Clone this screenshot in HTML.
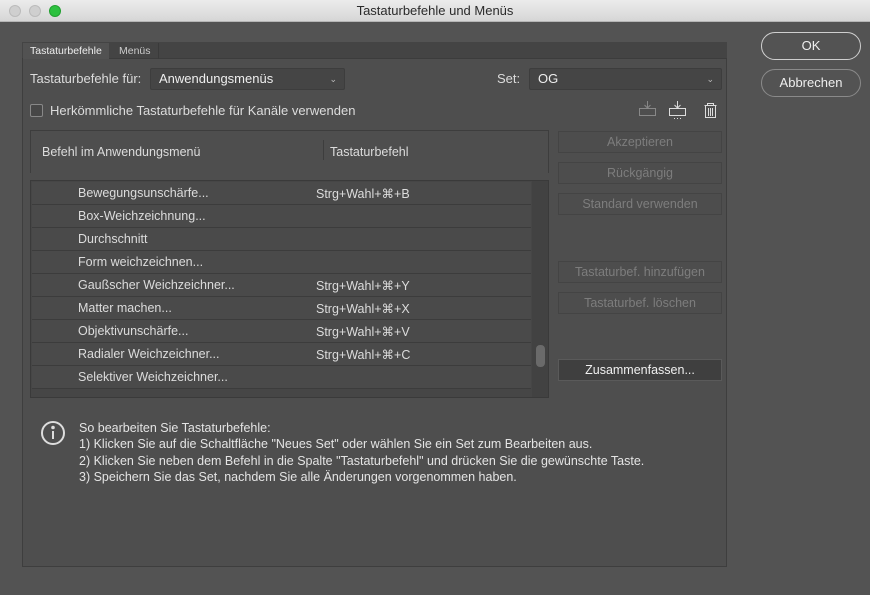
<!DOCTYPE html>
<html><head><meta charset="utf-8"><style>
*{box-sizing:border-box;margin:0;padding:0}
body{width:870px;height:595px;background:#535353;font-family:"Liberation Sans",sans-serif;font-size:12.5px;color:#dcdcdc;position:relative;overflow:hidden}
.abs{position:absolute}
.title{left:0;top:0;width:870px;height:22px;background:linear-gradient(#ececec,#d6d6d6);border-bottom:1px solid #b5b5b5;text-align:center;line-height:22px;color:#2a2a2a;font-size:13px}
.dot{top:5px;width:12px;height:12px;border-radius:50%}
.panel{left:22px;top:42px;width:705px;height:525px;background:#4e4e4e;border:1px solid #3e3e3e}
.tabbar{left:22px;top:42px;width:705px;height:17px;background:#444;border-bottom:1px solid #3c3c3c}
.tab{top:43px;height:16px;line-height:16px;font-size:10.5px;padding:0 7px}
.sel{left:150px;height:22px;background:#454545;border:1px solid #3d3d3d;border-radius:2px;color:#eee;padding-left:8px;line-height:20px;font-size:13px}
.chev{position:absolute;right:7px;top:0;font-size:9px;color:#bbb}
.btn{left:558px;width:164px;height:22px;border:1px solid #444;background:#4d4d4d;text-align:center;line-height:20px;color:#7d7d7d;font-size:12.5px}
.row{left:32px;width:499px;height:23px;border-bottom:1px solid #3c3c3c;background:#4a4a4a}
.row span{position:absolute;top:4px}
.c1{left:46px}.c2{left:284px}
.pill{left:761px;width:100px;height:28px;border:1px solid #cfcfcf;border-radius:14px;text-align:center;line-height:26px;color:#eee;font-size:13px}
</style></head><body>
<div class="abs title">Tastaturbefehle und Menüs</div>
<div class="abs dot" style="left:9px;background:#cfcfcf;border:1px solid #bbb"></div>
<div class="abs dot" style="left:29px;background:#cfcfcf;border:1px solid #bbb"></div>
<div class="abs dot" style="left:49px;background:#2dc13f;border:1px solid #22a030"></div>

<div class="abs panel"></div>
<div class="abs tabbar"></div>
<div class="abs tab" style="left:23px;background:#525252;color:#eee">Tastaturbefehle</div>
<div class="abs tab" style="left:112px;border-right:1px solid #3a3a3a;color:#ccc">Menüs</div>

<div class="abs" style="left:30px;top:71px;font-size:13px">Tastaturbefehle für:</div>
<div class="abs sel" style="top:68px;width:195px">Anwendungsmenüs<span class="chev">⌄</span></div>
<div class="abs" style="left:497px;top:71px;font-size:13px">Set:</div>
<div class="abs sel" style="left:529px;top:68px;width:193px">OG<span class="chev">⌄</span></div>

<div class="abs" style="left:30px;top:104px;width:13px;height:13px;border:1px solid #888;border-radius:2px;background:#474747"></div>
<div class="abs" style="left:50px;top:103px;font-size:13px">Herkömmliche Tastaturbefehle für Kanäle verwenden</div>

<svg class="abs" style="left:636px;top:100px" width="90" height="20" viewBox="0 0 90 20" fill="none" stroke="#9a9a9a" stroke-width="1">
<path d="M3.5 8.5h16v7h-16z M11.5 1v7 M8.5 5l3 3 3-3" stroke="#888"/>
<path d="M33.5 8.5h16v7h-16z M41.5 1v7 M38.5 5l3 3 3-3 M38 18.5h1 M41 18.5h1 M44 18.5h1" stroke="#ddd"/>
<path d="M68.5 5.5h12 M71.5 5.5v-2h6v2 M69.5 5.5v12h10v-12 M72.5 8v8 M74.5 8v8 M76.5 8v8" stroke="#ddd"/>
</svg>

<div class="abs" style="left:30px;top:130px;width:519px;height:43px;border:1px solid #3d3d3d;border-bottom:none"></div>
<div class="abs" style="left:42px;top:145px;font-size:12.5px">Befehl im Anwendungsmenü</div>
<div class="abs" style="left:323px;top:140px;width:1px;height:20px;background:#3d3d3d"></div>
<div class="abs" style="left:330px;top:145px">Tastaturbefehl</div>

<div class="abs" style="left:30px;top:180px;width:519px;height:218px;border:1px solid #3a3a3a;background:#464646;overflow:hidden">
</div>
<div class="abs" style="left:31px;top:181px;width:501px;height:216px;overflow:hidden">
<div class="abs row" style="left:1px;top:1px"><span class="c1">Bewegungsunschärfe...</span><span class="c2">Strg+Wahl+⌘+B</span></div>
<div class="abs row" style="left:1px;top:24px"><span class="c1">Box-Weichzeichnung...</span></div>
<div class="abs row" style="left:1px;top:47px"><span class="c1">Durchschnitt</span></div>
<div class="abs row" style="left:1px;top:70px"><span class="c1">Form weichzeichnen...</span></div>
<div class="abs row" style="left:1px;top:93px"><span class="c1">Gaußscher Weichzeichner...</span><span class="c2">Strg+Wahl+⌘+Y</span></div>
<div class="abs row" style="left:1px;top:116px"><span class="c1">Matter machen...</span><span class="c2">Strg+Wahl+⌘+X</span></div>
<div class="abs row" style="left:1px;top:139px"><span class="c1">Objektivunschärfe...</span><span class="c2">Strg+Wahl+⌘+V</span></div>
<div class="abs row" style="left:1px;top:162px"><span class="c1">Radialer Weichzeichner...</span><span class="c2">Strg+Wahl+⌘+C</span></div>
<div class="abs row" style="left:1px;top:185px"><span class="c1">Selektiver Weichzeichner...</span></div>
</div>
<div class="abs" style="left:532px;top:181px;width:16px;height:216px;background:#424242"></div>
<div class="abs" style="left:536px;top:345px;width:9px;height:22px;border-radius:4px;background:#6a6a6a"></div>

<div class="abs btn" style="top:131px">Akzeptieren</div>
<div class="abs btn" style="top:162px">Rückgängig</div>
<div class="abs btn" style="top:193px">Standard verwenden</div>
<div class="abs btn" style="top:261px">Tastaturbef. hinzufügen</div>
<div class="abs btn" style="top:292px">Tastaturbef. löschen</div>
<div class="abs btn" style="top:359px;background:#3f3f3f;border-color:#5a5a5a;color:#f0f0f0">Zusammenfassen...</div>

<div class="abs pill" style="top:32px">OK</div>
<div class="abs pill" style="top:69px;border-color:#8a8a8a">Abbrechen</div>

<svg class="abs" style="left:40px;top:420px" width="26" height="26" viewBox="0 0 26 26" fill="none" stroke="#ddd" stroke-width="2"><circle cx="13" cy="13" r="11"/><path d="M13 11v8"/><circle cx="13" cy="7.5" r="0.8" fill="#ddd"/></svg>
<div class="abs" style="left:79px;top:420px;line-height:16.3px;font-size:12.5px;color:#e4e4e4">So bearbeiten Sie Tastaturbefehle:<br>1) Klicken Sie auf die Schaltfläche "Neues Set" oder wählen Sie ein Set zum Bearbeiten aus.<br>2) Klicken Sie neben dem Befehl in die Spalte "Tastaturbefehl" und drücken Sie die gewünschte Taste.<br>3) Speichern Sie das Set, nachdem Sie alle Änderungen vorgenommen haben.</div>
</body></html>
